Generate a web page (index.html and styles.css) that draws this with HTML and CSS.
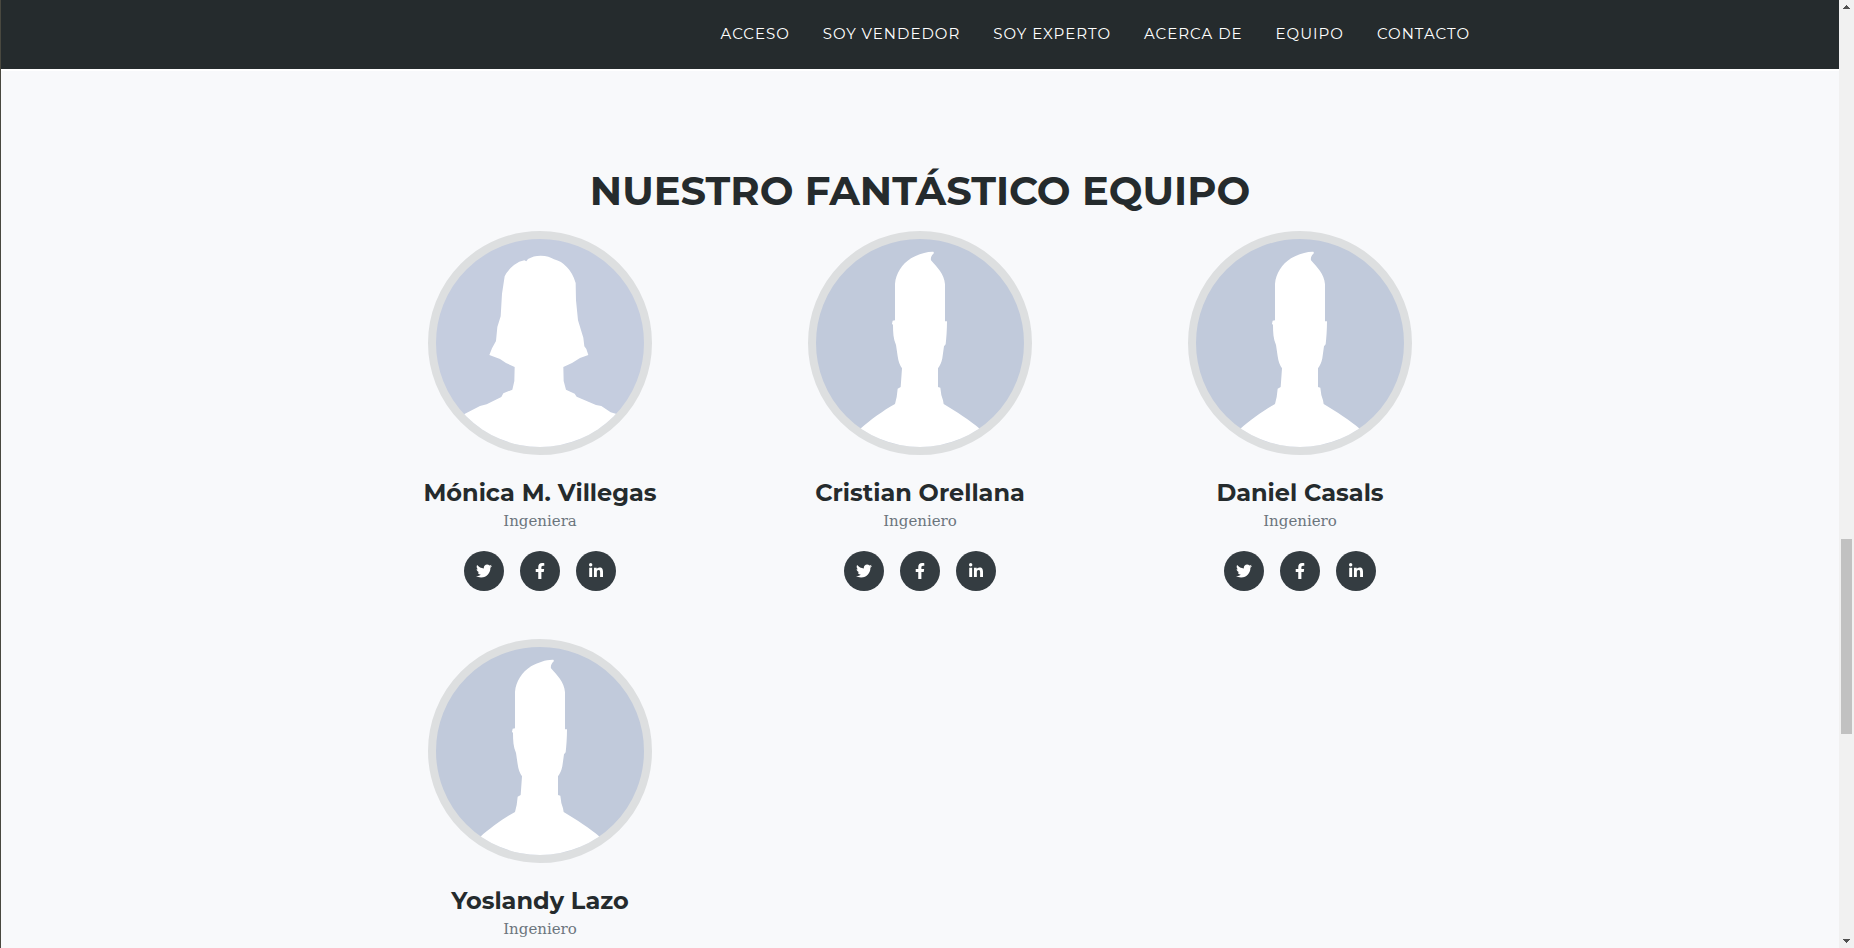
FILE: index.html
```
<!DOCTYPE html>
<html lang="es">
  <head>
    <meta charset="UTF-8" />
    <meta name="viewport" content="width=device-width, initial-scale=1.0" />
    <title>Nuestro fantástico equipo</title>
    <link rel="stylesheet" href="styles.css">
  </head>
  <body>
    <!-- Shared avatars and icons -->
    <svg class="sprite" aria-hidden="true">
      <symbol id="avatar-woman" viewBox="48 56 624 624">
        <path d="M254 168 Q262 150 282 134 Q298 122 313 120 L319 123 L324 116 Q340 106 362 106 Q388 107 402 117 Q424 122 441 141 Q458 158 467 188 L468 240 L474 300 L490 352 L493 378 L499 386 L505 404 L480 413 L456 428 L430 440 L431 482 L438 508 L464 520 L470 529 L528 554 L544 557 L572 576 L592 582 L680 640 V700 H40 V640 L132 582 L180 557 L200 552 L244 530 L250 519 L277 508 L283 482 L284 440 L258 428 L240 416 L208 404 L216 384 L228 362 L232 320 L242 288 L246 220 Z"/>
      </symbol>
      <symbol id="avatar-man" viewBox="48 56 624 624">
        <path d="M285 190 C288 160 305 132 333 114 C354 102 380 93 400 94 L402 98 C396 104 391 110 393 120 C410 140 433 160 435 192 V303 H441 C441 330 439 355 437 372 L432 378 L427 414 C424 428 420 436 414 444 V500 L421 502 L424 524 L429 540 L431 551 C470 575 510 600 539 625 L640 700 H80 L181 625 C210 600 250 570 285 551 L290 530 L293 505 L302 500 L306 444 C300 436 295 424 293 408 L288 374 C280 356 279 335 279 314 L276 310 L278 301 L285 300 Z"/>
      </symbol>
      <symbol id="icon-twitter" viewBox="0 0 512 512">
        <path d="M459.37 151.716c.325 4.548.325 9.097.325 13.645 0 138.72-105.583 298.558-298.558 298.558-59.452 0-114.68-17.219-161.137-47.106 8.447.974 16.568 1.299 25.34 1.299 49.055 0 94.213-16.568 130.274-44.832-46.132-.975-84.792-31.188-98.112-72.772 6.498.974 12.995 1.624 19.818 1.624 9.421 0 18.843-1.3 27.614-3.573-48.081-9.747-84.143-51.98-84.143-102.985v-1.299c13.969 7.797 30.214 12.67 47.431 13.319-28.264-18.843-46.781-51.005-46.781-87.391 0-19.492 5.197-37.36 14.294-52.954 51.655 63.675 129.3 105.258 216.365 109.807-1.624-7.797-2.599-15.918-2.599-24.04 0-57.828 46.782-104.934 104.934-104.934 30.213 0 57.502 12.67 76.67 33.137 23.715-4.548 46.456-13.32 66.599-25.34-7.798 24.366-24.366 44.833-46.132 57.827 21.117-2.273 41.584-8.122 60.426-16.243-14.292 20.791-32.161 39.308-52.628 54.253z"/>
      </symbol>
      <symbol id="icon-facebook" viewBox="0 0 320 512">
        <path d="M279.14 288l14.22-92.66h-88.91v-60.13c0-25.35 12.42-50.06 52.24-50.06h40.42V6.26S260.43 0 225.36 0c-73.22 0-121.08 44.38-121.08 124.72v70.62H22.89V288h81.39v224h100.17V288z"/>
      </symbol>
      <symbol id="icon-linkedin" viewBox="0 0 448 512">
        <path d="M100.28 448H7.4V148.9h92.88zM53.79 108.1C24.09 108.1 0 83.5 0 53.8a53.79 53.79 0 0 1 107.58 0c0 29.7-24.1 54.3-53.79 54.3zM447.9 448h-92.68V302.4c0-34.7-.7-79.2-48.29-79.2-48.29 0-55.69 37.7-55.69 76.7V448h-92.78V148.9h89.08v40.8h1.3c12.4-23.5 42.69-48.3 87.88-48.3 94 0 111.28 61.9 111.28 142.3V448z"/>
      </symbol>
    </svg>

    <div class="page">
      <header class="navbar">
        <nav class="container nav-links">
          <a href="#acceso">Acceso</a>
          <a href="#vendedor">Soy vendedor</a>
          <a href="#experto">Soy experto</a>
          <a href="#acerca">Acerca de</a>
          <a href="#equipo">Equipo</a>
          <a href="#contacto">Contacto</a>
        </nav>
      </header>

      <main class="team" id="equipo">
        <div class="container">
          <h2 class="team-heading">Nuestro fantástico equipo</h2>
          <div class="team-grid">
            <article class="member">
              <svg class="avatar avatar-light" role="img" aria-label="Mónica M. Villegas"><use href="#avatar-woman"/></svg>
              <h4>Mónica M. Villegas</h4>
              <p class="role">Ingeniera</p>
              <div class="social">
                <a href="#" aria-label="Twitter"><svg><use href="#icon-twitter"/></svg></a>
                <a href="#" aria-label="Facebook"><svg><use href="#icon-facebook"/></svg></a>
                <a href="#" aria-label="LinkedIn"><svg><use href="#icon-linkedin"/></svg></a>
              </div>
            </article>
            <article class="member">
              <svg class="avatar" role="img" aria-label="Cristian Orellana"><use href="#avatar-man"/></svg>
              <h4>Cristian Orellana</h4>
              <p class="role">Ingeniero</p>
              <div class="social">
                <a href="#" aria-label="Twitter"><svg><use href="#icon-twitter"/></svg></a>
                <a href="#" aria-label="Facebook"><svg><use href="#icon-facebook"/></svg></a>
                <a href="#" aria-label="LinkedIn"><svg><use href="#icon-linkedin"/></svg></a>
              </div>
            </article>
            <article class="member">
              <svg class="avatar" role="img" aria-label="Daniel Casals"><use href="#avatar-man"/></svg>
              <h4>Daniel Casals</h4>
              <p class="role">Ingeniero</p>
              <div class="social">
                <a href="#" aria-label="Twitter"><svg><use href="#icon-twitter"/></svg></a>
                <a href="#" aria-label="Facebook"><svg><use href="#icon-facebook"/></svg></a>
                <a href="#" aria-label="LinkedIn"><svg><use href="#icon-linkedin"/></svg></a>
              </div>
            </article>
            <article class="member">
              <svg class="avatar" role="img" aria-label="Yoslandy Lazo"><use href="#avatar-man"/></svg>
              <h4>Yoslandy Lazo</h4>
              <p class="role">Ingeniero</p>
            </article>
          </div>
        </div>
      </main>
    </div>

    <div class="scrollbar" aria-hidden="true">
      <svg class="arrow" viewBox="0 0 7 4"><path d="M3 0h1v1h1v1h1v1h1v1H0V3h1V2h1V1h1z"/></svg>
      <div class="track">
        <div class="thumb"></div>
      </div>
      <svg class="arrow" viewBox="0 0 7 4"><path d="M0 0h7v1H6v1H5v1H4v1H3V3H2V2H1V1H0z"/></svg>
    </div>
  </body>
</html>
```
FILE: styles.css
```
:root {
  --dark: #252b2d;
  --icon-bg: #343c41;
  --light: #f8f9fb;
  --muted: #6c757d;
  --ring: #dddfe0;
  --avatar-bg: #c1cadb;
  --heading-font: Montserrat, Inter, sans-serif;
  --body-font: "Roboto Slab", "DejaVu Serif", serif;
}

* {
  box-sizing: border-box;
}

body {
  margin: 0;
  display: flex;
  height: 100vh;
  overflow: hidden;
  background-color: var(--light);
  color: var(--dark);
  font-family: var(--body-font);
}

.sprite {
  position: absolute;
  width: 0;
  height: 0;
}

.page {
  flex: 1;
  min-width: 0;
  overflow: hidden;
  border-left: 1px solid #49483f;
}

.container {
  max-width: 1140px;
  margin: 0 auto;
}

.navbar {
  background-color: var(--dark);
  border-bottom: 2px solid #fff;
}

.nav-links {
  display: flex;
  justify-content: flex-end;
  gap: 33px;
  padding: 22px 20px 23px;
}

.nav-links a {
  color: #fff;
  font-family: var(--heading-font);
  font-size: 15px;
  font-weight: 400;
  line-height: 24px;
  letter-spacing: 1px;
  text-decoration: none;
  text-transform: uppercase;
  white-space: nowrap;
}

.team {
  padding: 96px 0;
}

.team-heading {
  margin: 0 0 16px;
  font-family: var(--heading-font);
  font-size: 40px;
  font-weight: 700;
  line-height: 48px;
  text-align: center;
  text-transform: uppercase;
}

.team-grid {
  display: grid;
  grid-template-columns: repeat(3, 1fr);
  row-gap: 48px;
}

.member {
  display: flex;
  flex-direction: column;
  align-items: center;
}

.avatar {
  width: 224px;
  height: 224px;
  border: 8px solid var(--ring);
  border-radius: 50%;
  background-color: var(--avatar-bg);
  fill: #fff;
}

.avatar-light {
  background-color: #c5cddf;
}

.member h4 {
  margin: 24px 0 0;
  font-family: var(--heading-font);
  font-size: 24px;
  font-weight: 700;
  line-height: 28px;
}

.role {
  margin: 0 0 16px;
  color: var(--muted);
  font-size: 15px;
  line-height: 28px;
}

.social {
  display: flex;
  gap: 16px;
}

.social a {
  display: flex;
  align-items: center;
  justify-content: center;
  width: 40px;
  height: 40px;
  border-radius: 50%;
  background-color: var(--icon-bg);
}

.social svg {
  width: 16px;
  height: 16px;
  fill: #fff;
}

.scrollbar {
  display: flex;
  flex-direction: column;
  align-items: center;
  width: 15px;
  padding: 5px 0;
  background-color: #f1f1f1;
}

.arrow {
  width: 7px;
  height: 4px;
  fill: #505050;
}

.track {
  flex: 1;
  width: 11px;
}

.thumb {
  height: 21%;
  background-color: #c1c1c1;
}

/* Empty track above the thumb */
.track::before {
  content: "";
  display: block;
  height: 57%;
}
```
